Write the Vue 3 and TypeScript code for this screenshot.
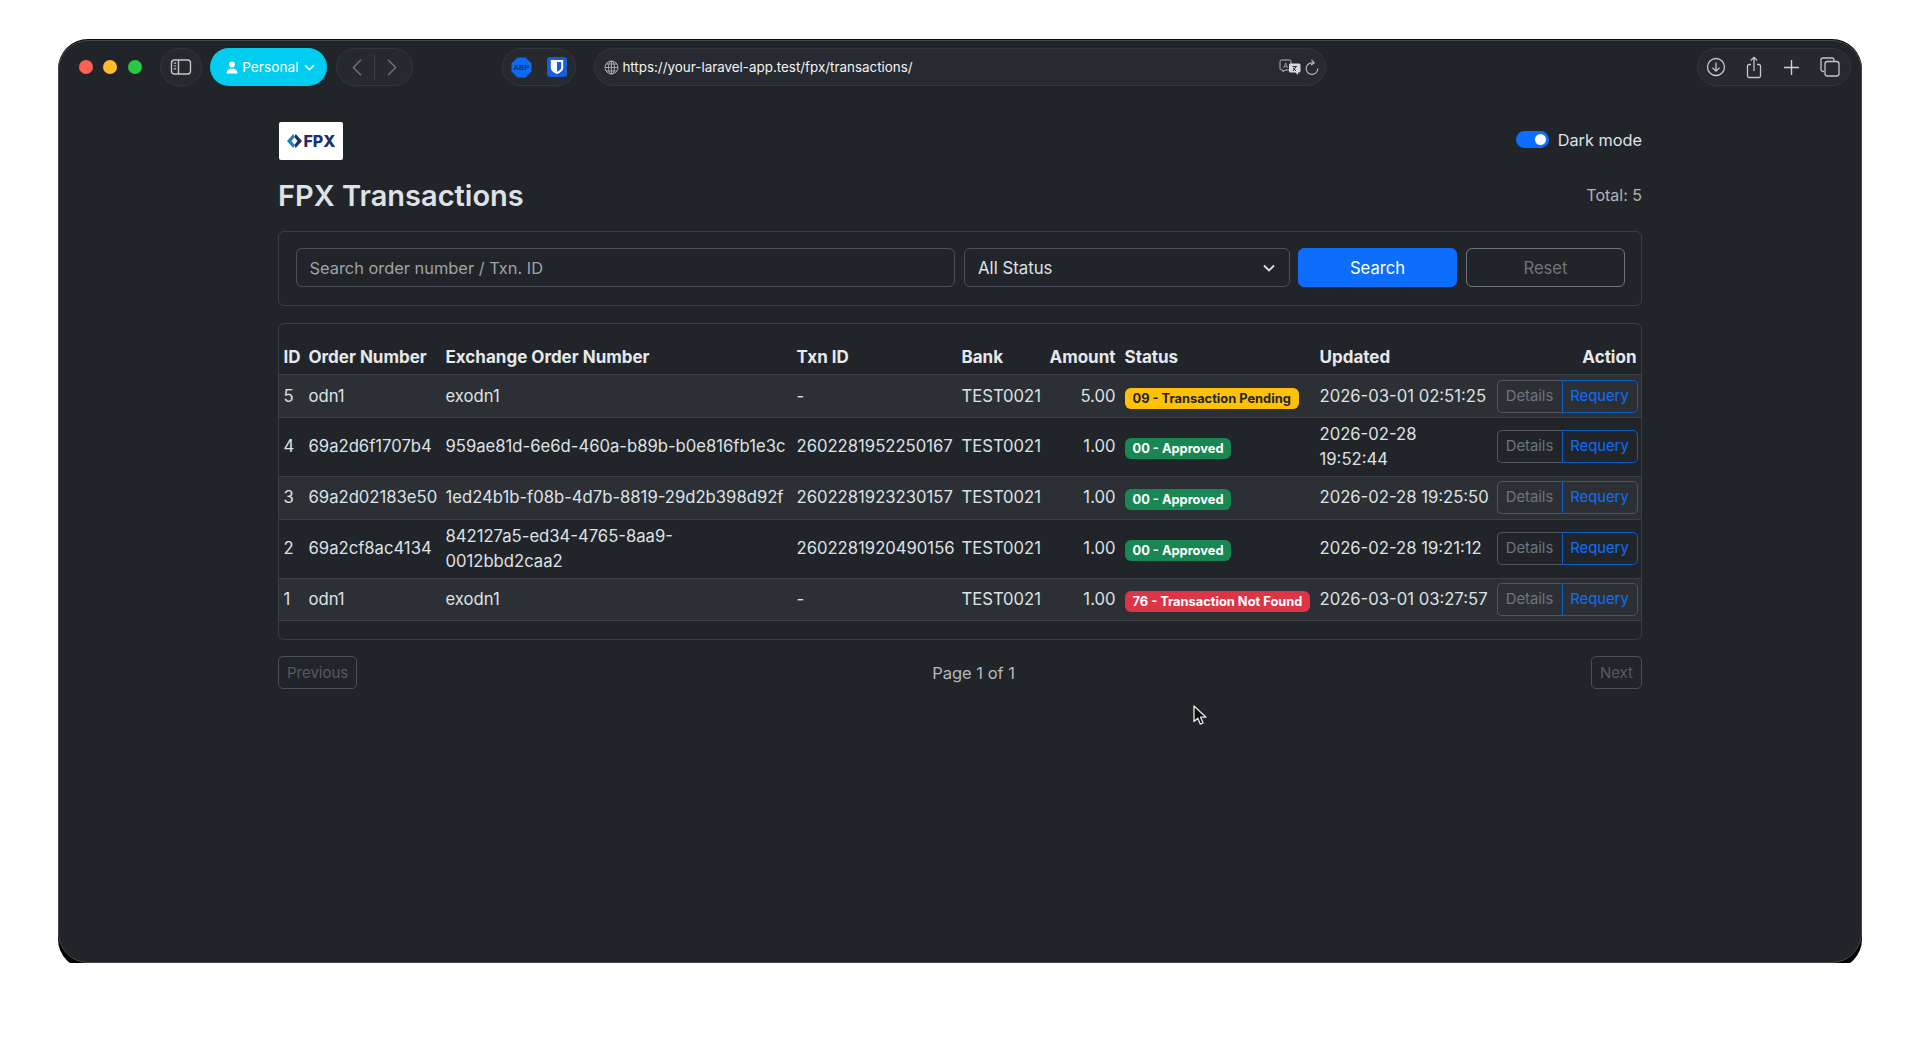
<script setup lang="ts">
interface Row {
  id: number
  order: string
  exchange: string
  txn: string
  bank: string
  amount: string
  status: string
  tone: string
  updated: string
  wrapDate?: boolean
}

const rows: Row[] = [
  { id: 5, order: 'odn1', exchange: 'exodn1', txn: '-', bank: 'TEST0021', amount: '5.00', status: '09 - Transaction Pending', tone: 'warn', updated: '2026-03-01 02:51:25' },
  { id: 4, order: '69a2d6f1707b4', exchange: '959ae81d-6e6d-460a-b89b-b0e816fb1e3c', txn: '2602281952250167', bank: 'TEST0021', amount: '1.00', status: '00 - Approved', tone: 'ok', updated: '2026-02-28 19:52:44', wrapDate: true },
  { id: 3, order: '69a2d02183e50', exchange: '1ed24b1b-f08b-4d7b-8819-29d2b398d92f', txn: '2602281923230157', bank: 'TEST0021', amount: '1.00', status: '00 - Approved', tone: 'ok', updated: '2026-02-28 19:25:50' },
  { id: 2, order: '69a2cf8ac4134', exchange: '842127a5-ed34-4765-8aa9-0012bbd2caa2', txn: '2602281920490156', bank: 'TEST0021', amount: '1.00', status: '00 - Approved', tone: 'ok', updated: '2026-02-28 19:21:12' },
  { id: 1, order: 'odn1', exchange: 'exodn1', txn: '-', bank: 'TEST0021', amount: '1.00', status: '76 - Transaction Not Found', tone: 'bad', updated: '2026-03-01 03:27:57' },
]
</script>

<template>
  <div class="window">
    <header class="toolbar">
      <div class="lights">
        <span class="light red"></span>
        <span class="light yellow"></span>
        <span class="light green"></span>
      </div>
      <div class="pill side">
        <svg width="22" height="18" viewBox="0 0 22 18" fill="none" stroke="#c4c6c8" stroke-width="1.4">
          <rect x="1.5" y="2" width="19" height="14" rx="3" />
          <path d="M8.5 2v14" />
          <path d="M3.8 5.200h2.400M3.8 8h2.400M3.8 10.800h2.400" stroke-width="1.2" />
        </svg>
      </div>
      <div class="profile">
        <svg width="12" height="13" viewBox="0 0 12 13" fill="#fff">
          <circle cx="6" cy="3.4" r="2.9" />
          <path d="M0.6 12.6c0-3.3 2.3-5 5.4-5s5.4 1.7 5.4 5z" />
        </svg>
        <span class="profile-name">Personal</span>
        <svg width="11" height="7" viewBox="0 0 11 7" fill="none" stroke="#fff" stroke-width="1.5">
          <path d="M1 1.2l4.5 4.4L10 1.2" />
        </svg>
      </div>
      <div class="pill nav">
        <svg width="10" height="17" viewBox="0 0 10 17" fill="none" stroke="#6b6e72" stroke-width="1.6">
          <path d="M9 0.800L1.400 8.500 9 16.200" />
        </svg>
        <span class="divider"></span>
        <svg width="10" height="17" viewBox="0 0 10 17" fill="none" stroke="#6b6e72" stroke-width="1.6">
          <path d="M1 0.800l7.600 7.700L1 16.200" />
        </svg>
      </div>
      <div class="pill ext">
        <svg width="21" height="21" viewBox="0 0 21 21">
          <path d="M6.500 0.500h8l6 6v8l-6 6h-8l-6-6v-8z" fill="#0a6cf5" />
          <text x="10.500" y="13.300" text-anchor="middle" class="abp">ABP</text>
        </svg>
        <svg width="20" height="20" viewBox="0 0 20 20">
          <rect width="20" height="20" rx="3" fill="#175ddc" />
          <path d="M3.800 3h12.400v7.500c0 3.400-3 5.200-6.200 6.600-3.200-1.400-6.200-3.200-6.200-6.600z" fill="#fff" />
          <path d="M10 5v9.800c2.300-1.100 4.200-2.400 4.200-4.600V5z" fill="#175ddc" />
        </svg>
      </div>
      <div class="pill url">
        <svg class="globe" width="15" height="15" viewBox="0 0 15 15" fill="none" stroke="#a4a6a9" stroke-width="1">
          <circle cx="7.500" cy="7.500" r="6.500" />
          <ellipse cx="7.500" cy="7.500" rx="3" ry="6.500" />
          <path d="M7.500 1v13M1 7.500h13M2 4h11M2 11h11" />
        </svg>
        <span class="address">https://your-laravel-app.test/fpx/transactions/</span>
        <svg class="translate" width="22" height="17" viewBox="0 0 22 17">
          <path d="M2.500 1h8a1.500 1.500 0 0 1 1.500 1.500v7a1.500 1.500 0 0 1-1.500 1.500H6l-2 2v-2H2.500A1.500 1.500 0 0 1 1 9.500v-7A1.500 1.500 0 0 1 2.500 1z" fill="none" stroke="#b5b7b9" stroke-width="1" />
          <text x="6.500" y="8.500" text-anchor="middle" class="tr-a">A</text>
          <path d="M11.500 4.500h8.500a1.500 1.500 0 0 1 1.500 1.500v6a1.500 1.500 0 0 1-1.500 1.500h-1v2.500l-2.500-2.500h-5a1.500 1.500 0 0 1-1.500-1.500v-6a1.500 1.500 0 0 1 1.500-1.500z" fill="#d8d9da" />
          <path d="M13.500 7.500h4.500M17 7.500l-3 4.500M14 9l3 3" stroke="#26292d" stroke-width="1" fill="none" />
        </svg>
        <svg class="reload" width="14" height="17" viewBox="0 0 14 17" fill="none" stroke="#b5b7b9" stroke-width="1.200">
          <path d="M8.500 4A5.800 5.800 0 1 0 12.800 9.500" />
          <path d="M6.500 0.800L9.200 3.800 6 6" />
        </svg>
      </div>
      <div class="pill tools">
        <svg width="20" height="20" viewBox="0 0 20 20" fill="none" stroke="#c4c6c8" stroke-width="1.300">
          <circle cx="10" cy="10" r="8.500" />
          <path d="M10 5.500v8.500M6.500 10.800L10 14.200l3.500-3.400" />
        </svg>
        <svg width="16" height="23" viewBox="0 0 16 23" fill="none" stroke="#c4c6c8" stroke-width="1.300">
          <path d="M5 8.500H3a1.500 1.500 0 0 0-1.500 1.500v10A1.500 1.500 0 0 0 3 21.500h10a1.500 1.500 0 0 0 1.500-1.500V10A1.500 1.500 0 0 0 13 8.500h-2" />
          <path d="M8 15V1.500M4.800 4.500L8 1.300l3.200 3.200" />
        </svg>
        <svg width="17" height="17" viewBox="0 0 17 17" fill="none" stroke="#d0d2d4" stroke-width="1.400">
          <path d="M8.500 1v15M1 8.500h15" />
        </svg>
        <svg width="20" height="20" viewBox="0 0 20 20" fill="none" stroke="#c4c6c8" stroke-width="1.300">
          <path d="M4 14.500H3a2 2 0 0 1-2-2V3a2 2 0 0 1 2-2h9a2 2 0 0 1 2 2v1" />
          <rect x="5" y="4.500" width="14" height="14.500" rx="2.500" />
        </svg>
      </div>
    </header>

    <main class="page">
      <div class="top-row">
        <div class="logo">
          <svg width="15" height="14" viewBox="0 0 15 14">
            <path d="M6.300 0L0 7l6.300 7 1.400-3L4.500 7l3.200-4z" fill="#1f7ec9" />
            <path d="M8.700 0L15 7l-6.300 7-1.400-3 3.200-4-3.200-4z" fill="#1d2f6f" />
          </svg>
          <span>FPX</span>
        </div>
        <div class="toggle-wrap">
          <span class="toggle"><span class="knob"></span></span>
          <span class="toggle-label">Dark mode</span>
        </div>
      </div>

      <div class="title-row">
        <h1>FPX Transactions</h1>
        <span class="total">Total: 5</span>
      </div>

      <section class="card filter">
        <div class="field search">Search order number / Txn. ID</div>
        <div class="field select">
          <span>All Status</span>
          <svg width="14" height="10" viewBox="0 0 14 10" fill="none" stroke="#dee2e6" stroke-width="1.800">
            <path d="M2 2.500l5 5 5-5" />
          </svg>
        </div>
        <button class="primary" type="button">Search</button>
        <button class="secondary" type="button">Reset</button>
      </section>

      <section class="card table-card">
        <table>
          <colgroup>
            <col class="c-id" /><col class="c-order" /><col class="c-ex" /><col class="c-txn" /><col class="c-bank" />
            <col class="c-amt" /><col class="c-status" /><col class="c-upd" /><col class="c-act" />
          </colgroup>
          <thead>
            <tr>
              <th>ID</th>
              <th>Order Number</th>
              <th>Exchange Order Number</th>
              <th>Txn ID</th>
              <th>Bank</th>
              <th class="right">Amount</th>
              <th>Status</th>
              <th>Updated</th>
              <th class="right">Action</th>
            </tr>
          </thead>
          <tbody>
            <tr v-for="(r, i) in rows" :key="r.id" :class="{ striped: i % 2 === 0 }">
              <td>{{ r.id }}</td>
              <td>{{ r.order }}</td>
              <td>{{ r.exchange }}</td>
              <td>{{ r.txn }}</td>
              <td>{{ r.bank }}</td>
              <td class="right">{{ r.amount }}</td>
              <td><span class="badge" :class="r.tone">{{ r.status }}</span></td>
              <td class="date" :class="{ wrap: r.wrapDate }">{{ r.updated }}</td>
              <td class="right">
                <div class="group">
                  <span class="details">Details</span>
                  <span class="requery">Requery</span>
                </div>
              </td>
            </tr>
          </tbody>
        </table>
      </section>

      <nav class="pager">
        <span class="page-btn prev">Previous</span>
        <span class="page-label">Page 1 of 1</span>
        <span class="page-btn next">Next</span>
      </nav>
    </main>

    <svg class="cursor" width="14" height="21" viewBox="0 0 14 21">
      <path d="M1 1v15.500l3.800-3.300 2.500 6 2.800-1.200-2.500-5.800H13z" fill="#0b0b0b" stroke="#e8e8e8" stroke-width="1.300" stroke-linejoin="round" />
    </svg>
  </div>
</template>

<style>
html,
body {
  margin: 0;
  background: #fff;
}
</style>

<style scoped>
.window {
  position: relative;
  box-sizing: border-box;
  width: 1804px;
  height: 923px;
  margin: 40px 0 0 58px;
  background: #212529;
  border: 1px solid #45484c;
  border-radius: 30px;
  box-shadow: 0 6px 0 #000, 0 -1px 0 #0c0c0c;
  font-family: Inter, "Liberation Sans", sans-serif;
  color: #dee2e6;
  overflow: hidden;
}
.cursor {
  position: absolute;
  left: 1134px;
  top: 664px;
}
.toolbar {
  display: flex;
  align-items: center;
  height: 38px;
  padding: 7px 10px 0 20px;
}
.lights {
  display: flex;
  gap: 10.4px;
  margin-right: 18.6px;
}
.light {
  width: 14px;
  height: 14px;
  border-radius: 50%;
}
.red { background: #ff5f57; }
.yellow { background: #febc2e; }
.green { background: #28c840; }
.pill {
  box-sizing: border-box;
  display: flex;
  align-items: center;
  height: 38px;
  border: 1px solid #33373b;
  border-radius: 19px;
  background: #26292e;
}
.side {
  justify-content: center;
  width: 42px;
}
.profile {
  box-sizing: border-box;
  display: flex;
  align-items: center;
  justify-content: center;
  gap: 4px;
  width: 117px;
  height: 38px;
  margin-left: 8px;
  padding-left: 3px;
  border-radius: 19px;
  background: #00cdf0;
  color: #fff;
  font-size: 13.7px;
}
.profile-name {
  margin-right: 1px;
}
.nav {
  justify-content: space-between;
  width: 77px;
  margin-left: 9px;
  padding: 0 15px;
}
.divider {
  width: 1px;
  height: 24px;
  background: #3d4044;
}
.ext {
  justify-content: space-between;
  width: 74px;
  margin-left: 89px;
  padding: 0 8px;
}
.abp {
  font-family: "Liberation Sans", sans-serif;
  font-size: 7.500px;
  font-weight: 700;
  fill: #1d2f6f;
}
.url {
  width: 732px;
  margin-left: 18px;
  padding: 0 6.500px 0 9px;
  background: #272b31;
}
.address {
  flex: 1;
  margin-left: 3px;
  color: #f2f3f4;
  font-size: 13.400px;
}
.tr-a {
  font-family: "Liberation Sans", sans-serif;
  font-size: 7px;
  fill: #b5b7b9;
}
.reload {
  margin-left: 4px;
}
.tools {
  justify-content: space-between;
  width: 154px;
  margin-left: auto;
  padding: 0 10px 0 8px;
}
.page {
  width: 1364px;
  margin: 36px auto 0;
}
.top-row,
.title-row {
  display: flex;
  align-items: center;
  justify-content: space-between;
}
.top-row {
  height: 38px;
}
.logo {
  display: flex;
  align-items: center;
  justify-content: center;
  gap: 2px;
  width: 64px;
  height: 38px;
  margin-left: 1px;
  background: #fff;
  border-radius: 2px;
  color: #1d2f6f;
  font-size: 16px;
  font-weight: 800;
}
.toggle-wrap {
  display: flex;
  align-items: center;
  gap: 9px;
  margin-top: -3px;
}
.toggle {
  display: flex;
  align-items: center;
  justify-content: flex-end;
  width: 33px;
  height: 17px;
  padding: 0 3px;
  box-sizing: border-box;
  border-radius: 9px;
  background: #0d6efd;
}
.knob {
  width: 11px;
  height: 11px;
  border-radius: 50%;
  background: #fff;
}
.toggle-label {
  font-size: 16.300px;
}
.title-row {
  height: 36px;
  margin-top: 17px;
}
h1 {
  margin: 0;
  font-size: 29px;
  font-weight: 600;
  color: #dee2e6;
}
.total {
  font-size: 16px;
  color: #b0b4b8;
}
.card {
  box-sizing: border-box;
  border: 1px solid #3a3e43;
  border-radius: 6px;
}
.filter {
  display: flex;
  align-items: center;
  height: 75px;
  margin-top: 18px;
  padding: 0 16px 2px 17px;
}
.filter > * {
  flex: none;
}
.field {
  box-sizing: border-box;
  display: flex;
  align-items: center;
  height: 39px;
  padding: 0 13px;
  border: 1px solid #495057;
  border-radius: 6px;
}
.search {
  width: 659px;
  padding-left: 12.500px;
  color: #9ea3a8;
  font-size: 16.400px;
}
.select {
  justify-content: space-between;
  width: 326px;
  margin-left: 9px;
  font-size: 16.800px;
}
.primary,
.secondary {
  box-sizing: border-box;
  width: 159px;
  height: 39px;
  border-radius: 6px;
  font: inherit;
  font-size: 16.600px;
}
.primary {
  margin-left: 8px;
  border: 1px solid #0d6efd;
  background: #0d6efd;
  color: #fff;
}
.secondary {
  margin-left: 9px;
  border: 1px solid #6c757d;
  background: transparent;
  color: #6c757d;
}
.table-card {
  height: 317px;
  margin-top: 17px;
  padding: 17px 0;
}
table {
  width: 100%;
  table-layout: fixed;
  border-collapse: collapse;
  font-size: 16.650px;
  line-height: 25px;
}
.c-id { width: 25px; }
.c-order { width: 137px; }
.c-ex { width: 351px; }
.c-txn { width: 165px; }
.c-bank { width: 87px; }
.c-amt { width: 76px; }
.c-status { width: 195px; }
.c-upd { width: 177px; }
.c-act { width: 149px; }
th,
td {
  padding: 4.200px 4.500px;
  border-bottom: 1px solid #3c4045;
  text-align: left;
  vertical-align: middle;
  box-sizing: border-box;
}
th {
  font-size: 17px;
  font-weight: 700;
  color: #e6e9ec;
  white-space: nowrap;
}
th.right,
td.right {
  text-align: right;
}
.date {
  white-space: nowrap;
}
.date.wrap {
  white-space: normal;
}
.striped td {
  background: #2c3034;
}
.badge {
  display: inline-block;
  position: relative;
  top: 1px;
  padding: 0 8px;
  height: 21px;
  border-radius: 6px;
  font-size: 12.850px;
  font-weight: 700;
  line-height: 21px;
  white-space: nowrap;
  color: #fff;
  vertical-align: middle;
}
.warn { background: #ffc107; color: #212529; }
.ok { background: #198754; }
.bad { background: #dc3545; }
.group {
  display: inline-flex;
  vertical-align: middle;
  font-size: 14.800px;
  line-height: 31px;
}
.details,
.requery {
  box-sizing: border-box;
  height: 33px;
  text-align: center;
  border-style: solid;
  border-width: 1px;
}
.details {
  width: 65px;
  border-color: #50565c;
  border-radius: 5px 0 0 5px;
  border-right: 0;
  color: #6c757d;
}
.requery {
  width: 76px;
  border-color: #0e5ec9;
  border-radius: 0 5px 5px 0;
  color: #0d6efd;
}
.pager {
  display: flex;
  align-items: center;
  justify-content: space-between;
  margin-top: 16px;
}
.page-btn {
  box-sizing: border-box;
  height: 33px;
  padding: 0 8px;
  border: 1px solid #495057;
  border-radius: 5px;
  color: #555b61;
  font-size: 15px;
  line-height: 31px;
}
.page-label {
  margin-left: -1px;
  color: #b5b9bd;
  font-size: 16.500px;
}
</style>
